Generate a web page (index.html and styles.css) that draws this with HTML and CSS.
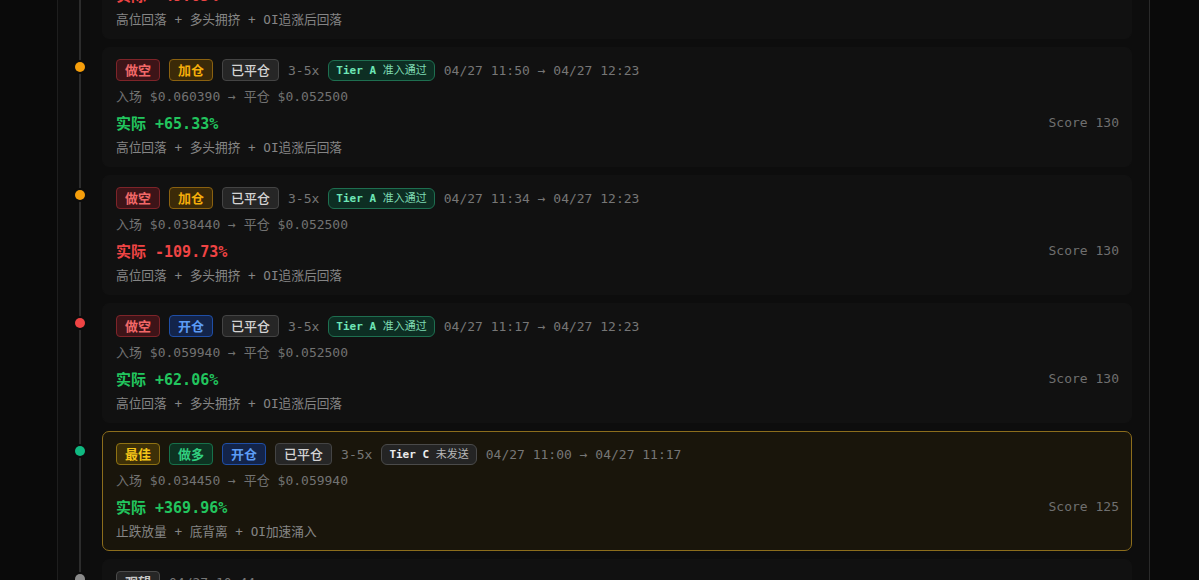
FILE: index.html
```html
<!DOCTYPE html>
<html lang="zh-CN">
<head>
    <meta charset="UTF-8">
    <meta name="viewport" content="width=device-width, initial-scale=1.0">
    <title>信号回放</title>
    <link rel="stylesheet" href="styles.css">
</head>
<body>
    <div class="panel">
        <ul class="timeline">
            <li class="item">
                <div class="rail"><span class="dot dot-amber"></span></div>
                <div class="card">
                    <div class="tags">
                        <span class="tag tag-red">做空</span>
                        <span class="tag tag-amber">加仓</span>
                        <span class="tag tag-grey">已平仓</span>
                        <span class="lev">3-5x</span>
                        <span class="tier tier-a"><b>Tier A</b> 准入通过</span>
                        <span class="time">04/27 12:05 → 04/27 12:23</span>
                    </div>
                    <div class="prices">入场 $0.047810 → 平仓 $0.052500</div>
                    <div class="result">
                        <span class="pnl down">实际 -49.05%</span>
                        <span class="score">Score 130</span>
                    </div>
                    <div class="reason">高位回落 + 多头拥挤 + OI追涨后回落</div>
                </div>
            </li>
            <li class="item">
                <div class="rail"><span class="dot dot-amber"></span></div>
                <div class="card">
                    <div class="tags">
                        <span class="tag tag-red">做空</span>
                        <span class="tag tag-amber">加仓</span>
                        <span class="tag tag-grey">已平仓</span>
                        <span class="lev">3-5x</span>
                        <span class="tier tier-a"><b>Tier A</b> 准入通过</span>
                        <span class="time">04/27 11:50 → 04/27 12:23</span>
                    </div>
                    <div class="prices">入场 $0.060390 → 平仓 $0.052500</div>
                    <div class="result">
                        <span class="pnl up">实际 +65.33%</span>
                        <span class="score">Score 130</span>
                    </div>
                    <div class="reason">高位回落 + 多头拥挤 + OI追涨后回落</div>
                </div>
            </li>
            <li class="item">
                <div class="rail"><span class="dot dot-amber"></span></div>
                <div class="card">
                    <div class="tags">
                        <span class="tag tag-red">做空</span>
                        <span class="tag tag-amber">加仓</span>
                        <span class="tag tag-grey">已平仓</span>
                        <span class="lev">3-5x</span>
                        <span class="tier tier-a"><b>Tier A</b> 准入通过</span>
                        <span class="time">04/27 11:34 → 04/27 12:23</span>
                    </div>
                    <div class="prices">入场 $0.038440 → 平仓 $0.052500</div>
                    <div class="result">
                        <span class="pnl down">实际 -109.73%</span>
                        <span class="score">Score 130</span>
                    </div>
                    <div class="reason">高位回落 + 多头拥挤 + OI追涨后回落</div>
                </div>
            </li>
            <li class="item">
                <div class="rail"><span class="dot dot-red"></span></div>
                <div class="card">
                    <div class="tags">
                        <span class="tag tag-red">做空</span>
                        <span class="tag tag-blue">开仓</span>
                        <span class="tag tag-grey">已平仓</span>
                        <span class="lev">3-5x</span>
                        <span class="tier tier-a"><b>Tier A</b> 准入通过</span>
                        <span class="time">04/27 11:17 → 04/27 12:23</span>
                    </div>
                    <div class="prices">入场 $0.059940 → 平仓 $0.052500</div>
                    <div class="result">
                        <span class="pnl up">实际 +62.06%</span>
                        <span class="score">Score 130</span>
                    </div>
                    <div class="reason">高位回落 + 多头拥挤 + OI追涨后回落</div>
                </div>
            </li>
            <li class="item">
                <div class="rail"><span class="dot dot-green"></span></div>
                <div class="card card-best">
                    <div class="tags">
                        <span class="tag tag-gold">最佳</span>
                        <span class="tag tag-green">做多</span>
                        <span class="tag tag-blue">开仓</span>
                        <span class="tag tag-grey">已平仓</span>
                        <span class="lev">3-5x</span>
                        <span class="tier tier-c"><b>Tier C</b> 未发送</span>
                        <span class="time">04/27 11:00 → 04/27 11:17</span>
                    </div>
                    <div class="prices">入场 $0.034450 → 平仓 $0.059940</div>
                    <div class="result">
                        <span class="pnl up">实际 +369.96%</span>
                        <span class="score">Score 125</span>
                    </div>
                    <div class="reason">止跌放量 + 底背离 + OI加速涌入</div>
                </div>
            </li>
            <li class="item">
                <div class="rail"><span class="dot dot-grey"></span></div>
                <div class="card">
                    <div class="tags">
                        <span class="tag tag-watch">观望</span>
                        <span class="time">04/27 10:44</span>
                    </div>
                    <div class="prices">价格 $0.036120</div>
                    <div class="result">
                        <span class="pnl muted">未入场</span>
                        <span class="score">Score 95</span>
                    </div>
                    <div class="reason">震荡整理 + 量能不足</div>
                </div>
            </li>
        </ul>
    </div>
</body>
</html>
```

FILE: styles.css
```css
html, body {
    height: 100%;
}
body {
    margin: 0;
    background-color: #0a0a0a;
    color: #d4d4d4;
    font-family: "DejaVu Sans Mono", "Noto Sans CJK SC", monospace;
    font-size: 13px;
    overflow: hidden;
}
.panel {
    margin-left: 57px;
    width: 1074px;
    height: 100%;
    background-color: #0d0d0d;
    border-left: 1px solid #1e1e1e;
    border-right: 1px solid #2a2a2a;
    padding-right: 17px;
    box-sizing: content-box;
    overflow: hidden;
}
.timeline {
    list-style: none;
    margin: -81px 0 0 0;
    padding: 0;
    position: relative;
    display: flex;
    flex-direction: column;
    gap: 8px;
}
.timeline::before {
    content: "";
    position: absolute;
    left: 21px;
    top: 0;
    bottom: 0;
    width: 2px;
    background-color: #2c2c2c;
}
.item {
    display: flex;
}
.rail {
    width: 44px;
    flex: none;
    display: flex;
    justify-content: center;
    position: relative;
}
.dot {
    width: 10px;
    height: 10px;
    border-radius: 50%;
    margin-top: 15px;
    box-shadow: 0 0 0 2px #0d0d0d;
}
.dot-amber { background-color: #f59e0b; }
.dot-red { background-color: #ef4444; }
.dot-green { background-color: #10b981; }
.dot-grey { background-color: #8a8a8a; }

.card {
    flex: 1;
    background-color: #111111;
    border: 1px solid #111111;
    border-radius: 7px;
    padding: 11px 12px 9px 13px;
}
.card-best {
    background-color: #19150b;
    border-color: #8c6d1c;
}
.tags {
    display: flex;
    align-items: center;
    gap: 9px;
    height: 22px;
}
.tag {
    height: 22px;
    box-sizing: border-box;
    padding: 0 8px;
    border: 1px solid;
    border-radius: 4px;
    font-family: "Noto Sans CJK SC", sans-serif;
    font-size: 13px;
    font-weight: 700;
    line-height: 20px;
}
.tag-red { background-color: #3d1418; border-color: #7e2429; color: #f26868; }
.tag-amber { background-color: #3b2a08; border-color: #8a6110; color: #f5ae0b; }
.tag-grey { background-color: #262626; border-color: #444444; color: #d4d4d4; font-weight: 500; }
.tag-blue { background-color: #13244a; border-color: #1f4ea6; color: #5c9cf5; }
.tag-green { background-color: #0d3322; border-color: #17714a; color: #32cf80; }
.tag-gold { background-color: #3d3008; border-color: #8f7213; color: #f5c518; }
.tag-watch { background-color: #262626; border-color: #4a4a4a; color: #c8c8c8; }

.lev {
    color: #767676;
}
.tier {
    height: 21px;
    box-sizing: border-box;
    padding: 0 7px;
    border: 1px solid;
    border-radius: 6px;
    font-size: 11px;
    line-height: 19px;
    font-family: "DejaVu Sans Mono", "Noto Sans CJK SC", monospace;
}
.tier b {
    font-weight: 700;
}
.tier-a { background-color: #0d2e23; border-color: #1e6f50; color: #7fdcb3; }
.tier-a b { color: #6ee7b7; }
.tier-c { background-color: #242424; border-color: #4a4a4a; color: #b8b8b8; }
.tier-c b { color: #ececec; }
.time {
    color: #767676;
}
.prices {
    margin-top: 7px;
    line-height: 18px;
    color: #727272;
}
.result {
    margin-top: 6px;
    height: 20px;
    display: flex;
    justify-content: space-between;
    align-items: center;
}
.pnl {
    font-size: 15px;
    font-weight: 700;
}
.pnl.up { color: #22c55e; }
.pnl.down { color: #ef4444; }
.pnl.muted { color: #8a8a8a; }
.score {
    color: #6f6f6f;
}
.reason {
    margin-top: 7px;
    line-height: 18px;
    font-size: 12.7px;
    color: #858585;
}
```
